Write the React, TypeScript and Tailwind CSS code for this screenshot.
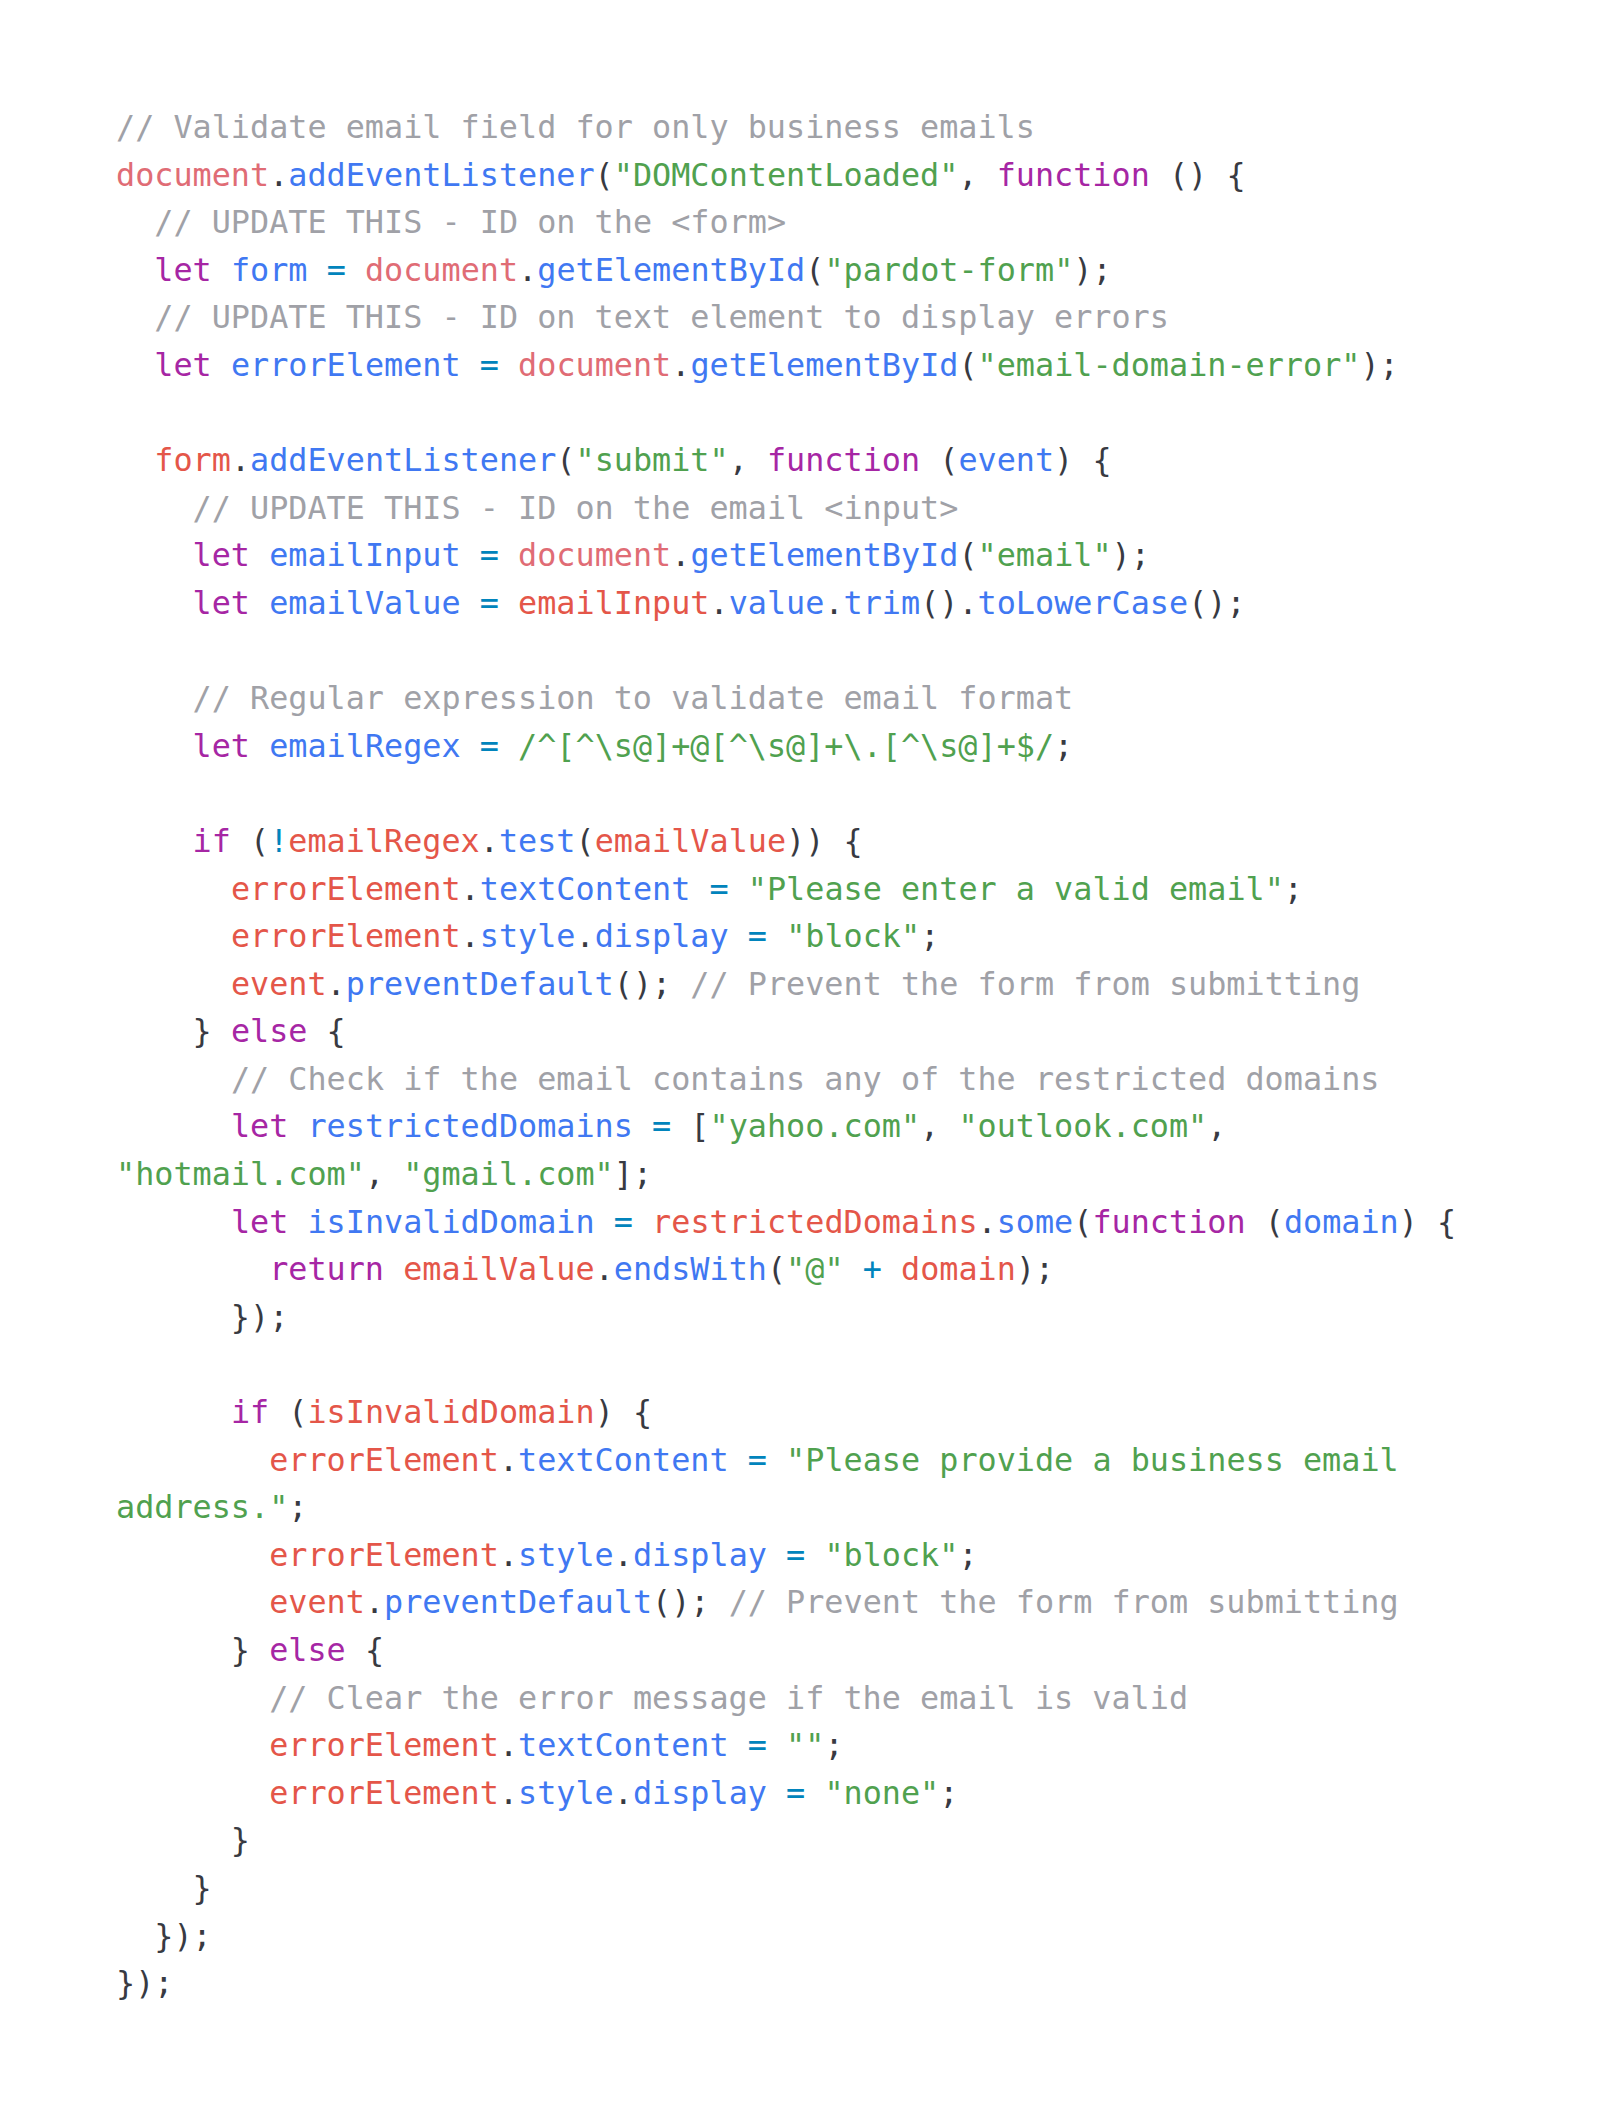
import React from "react";

type Tok = [string, string];

const C = "c", K = "k", F = "f", V = "v", D = "d", S = "s", O = "o", P = "p";

const cls: Record<string, string> = {
  c: "text-[#a0a1a7]",
  k: "text-[#a626a4]",
  f: "text-[#4078f2]",
  v: "text-[#e45649]",
  d: "text-[#e06c75]",
  s: "text-[#50a14f]",
  o: "text-[#0184bc]",
  p: "text-[#383a42]",
};

const lines: Tok[][] = [
  [[C, "// Validate email field for only business emails"]],
  [[D, "document"], [P, "."], [F, "addEventListener"], [P, "("], [S, '"DOMContentLoaded"'], [P, ", "], [K, "function"], [P, " () {"]],
  [[P, "  "], [C, "// UPDATE THIS - ID on the <form>"]],
  [[P, "  "], [K, "let"], [P, " "], [F, "form"], [P, " "], [O, "="], [P, " "], [D, "document"], [P, "."], [F, "getElementById"], [P, "("], [S, '"pardot-form"'], [P, ");"]],
  [[P, "  "], [C, "// UPDATE THIS - ID on text element to display errors"]],
  [[P, "  "], [K, "let"], [P, " "], [F, "errorElement"], [P, " "], [O, "="], [P, " "], [D, "document"], [P, "."], [F, "getElementById"], [P, "("], [S, '"email-domain-error"'], [P, ");"]],
  [],
  [[P, "  "], [V, "form"], [P, "."], [F, "addEventListener"], [P, "("], [S, '"submit"'], [P, ", "], [K, "function"], [P, " ("], [F, "event"], [P, ") {"]],
  [[P, "    "], [C, "// UPDATE THIS - ID on the email <input>"]],
  [[P, "    "], [K, "let"], [P, " "], [F, "emailInput"], [P, " "], [O, "="], [P, " "], [D, "document"], [P, "."], [F, "getElementById"], [P, "("], [S, '"email"'], [P, ");"]],
  [[P, "    "], [K, "let"], [P, " "], [F, "emailValue"], [P, " "], [O, "="], [P, " "], [V, "emailInput"], [P, "."], [F, "value"], [P, "."], [F, "trim"], [P, "()."], [F, "toLowerCase"], [P, "();"]],
  [],
  [[P, "    "], [C, "// Regular expression to validate email format"]],
  [[P, "    "], [K, "let"], [P, " "], [F, "emailRegex"], [P, " "], [O, "="], [P, " "], [S, "/^[^\\s@]+@[^\\s@]+\\.[^\\s@]+$/"], [P, ";"]],
  [],
  [[P, "    "], [K, "if"], [P, " ("], [O, "!"], [V, "emailRegex"], [P, "."], [F, "test"], [P, "("], [V, "emailValue"], [P, ")) {"]],
  [[P, "      "], [V, "errorElement"], [P, "."], [F, "textContent"], [P, " "], [O, "="], [P, " "], [S, '"Please enter a valid email"'], [P, ";"]],
  [[P, "      "], [V, "errorElement"], [P, "."], [F, "style"], [P, "."], [F, "display"], [P, " "], [O, "="], [P, " "], [S, '"block"'], [P, ";"]],
  [[P, "      "], [V, "event"], [P, "."], [F, "preventDefault"], [P, "(); "], [C, "// Prevent the form from submitting"]],
  [[P, "    } "], [K, "else"], [P, " {"]],
  [[P, "      "], [C, "// Check if the email contains any of the restricted domains"]],
  [[P, "      "], [K, "let"], [P, " "], [F, "restrictedDomains"], [P, " "], [O, "="], [P, " ["], [S, '"yahoo.com"'], [P, ", "], [S, '"outlook.com"'], [P, ","]],
  [[S, '"hotmail.com"'], [P, ", "], [S, '"gmail.com"'], [P, "];"]],
  [[P, "      "], [K, "let"], [P, " "], [F, "isInvalidDomain"], [P, " "], [O, "="], [P, " "], [V, "restrictedDomains"], [P, "."], [F, "some"], [P, "("], [K, "function"], [P, " ("], [F, "domain"], [P, ") {"]],
  [[P, "        "], [K, "return"], [P, " "], [V, "emailValue"], [P, "."], [F, "endsWith"], [P, "("], [S, '"@"'], [P, " "], [O, "+"], [P, " "], [V, "domain"], [P, ");"]],
  [[P, "      });"]],
  [],
  [[P, "      "], [K, "if"], [P, " ("], [V, "isInvalidDomain"], [P, ") {"]],
  [[P, "        "], [V, "errorElement"], [P, "."], [F, "textContent"], [P, " "], [O, "="], [P, " "], [S, '"Please provide a business email']],
  [[S, 'address."'], [P, ";"]],
  [[P, "        "], [V, "errorElement"], [P, "."], [F, "style"], [P, "."], [F, "display"], [P, " "], [O, "="], [P, " "], [S, '"block"'], [P, ";"]],
  [[P, "        "], [V, "event"], [P, "."], [F, "preventDefault"], [P, "(); "], [C, "// Prevent the form from submitting"]],
  [[P, "      } "], [K, "else"], [P, " {"]],
  [[P, "        "], [C, "// Clear the error message if the email is valid"]],
  [[P, "        "], [V, "errorElement"], [P, "."], [F, "textContent"], [P, " "], [O, "="], [P, " "], [S, '""'], [P, ";"]],
  [[P, "        "], [V, "errorElement"], [P, "."], [F, "style"], [P, "."], [F, "display"], [P, " "], [O, "="], [P, " "], [S, '"none"'], [P, ";"]],
  [[P, "      }"]],
  [[P, "    }"]],
  [[P, "  });"]],
  [[P, "});"]],
];

export default function App() {
  return (
    <div className="min-h-[2112px] w-full bg-white pt-[103px] pl-[116px] pr-[116px]">
      <div
        className="text-[31.8px] leading-[47.6px] text-[#383a42]"
        style={{ fontFamily: '"DejaVu Sans Mono", "Liberation Mono", monospace' }}
      >
        {lines.map((line, i) => (
          <div key={i} className="whitespace-pre h-[47.6px]">
            {line.length === 0 ? " " : line.map((t, j) => (
              <span key={j} className={cls[t[0]]}>{t[1]}</span>
            ))}
          </div>
        ))}
      </div>
    </div>
  );
}
